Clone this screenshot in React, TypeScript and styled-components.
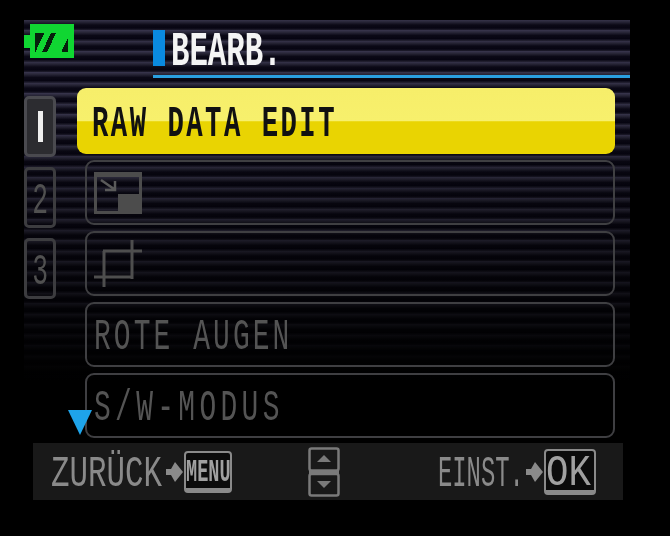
import React from 'react';
import styled, { createGlobalStyle } from 'styled-components';

const Global = createGlobalStyle`
  html, body { margin: 0; padding: 0; background: #000; }
`;

const osdFont = `"Liberation Mono", "DejaVu Sans Mono", monospace`;

const Screen = styled.div`
  width: 670px;
  height: 536px;
  background: #000;
  overflow: hidden;
  position: relative;
  box-sizing: border-box;
  padding-top: 20px;
  font-family: ${osdFont};
  filter: blur(0.5px);
`;

const Panel = styled.div`
  width: 606px;
  height: 420px;
  margin-left: 24px;
  position: relative;
  background:
    linear-gradient(to bottom, rgba(0, 0, 0, 0) 0, rgba(0, 0, 0, 0) 80px, rgba(0, 0, 0, 0.4) 200px, rgba(0, 0, 0, 0.8) 310px, #000 360px),
    repeating-linear-gradient(to bottom, #36334a 0, #272536 2px, #0b0916 5px, #070512 8px, #272536 10.5px);
`;

const Header = styled.div`
  height: 56px;
  display: flex;
  align-items: flex-start;
`;

const Battery = styled.div`
  width: 44px;
  height: 34px;
  margin: 4px 0 0 6px;
  background: #10d632;
  position: relative;
  box-sizing: border-box;
  padding: 9px 6px 6px 5px;
  display: flex;
`;

const BatteryNub = styled.span`
  position: absolute;
  left: -6px;
  top: 11px;
  width: 6px;
  height: 13px;
  background: #10d632;
`;

const BatteryCell = styled.span`
  flex: 1;
  background: linear-gradient(115deg, #06200c 0 22%, #10d632 22% 38%, #06200c 38% 50%, #10d632 50% 84%, #06200c 84%);
`;

const TitleBlock = styled.div`
  margin-left: 79px;
  flex: 1;
  height: 58px;
  border-bottom: 3px solid #2a9fe0;
  display: flex;
  align-items: flex-start;
  padding-top: 10px;
  box-sizing: border-box;
`;

const TitleMark = styled.span`
  width: 12px;
  height: 36px;
  background: #0a8ae0;
`;

const Condensed = styled.span<{ $size: number; $scale: number; $spacing?: number; $bold?: boolean; $color?: string }>`
  display: inline-block;
  padding-top: 6px;
  font-size: ${p => p.$size}px;
  line-height: 1;
  font-weight: ${p => (p.$bold ? 700 : 400)};
  letter-spacing: ${p => p.$spacing ?? 0}px;
  color: ${p => p.$color ?? '#7e7e7e'};
  white-space: pre;
  transform: scaleX(${p => p.$scale});
  transform-origin: left center;
`;

const TitleText = styled(Condensed)`
  margin: -8px 0 0 6px;
`;

const Body = styled.div`
  display: flex;
  margin-top: 12px;
  align-items: flex-start;
`;

const Tabs = styled.div`
  width: 32px;
  padding-top: 8px;
  display: flex;
  flex-direction: column;
  gap: 10px;
`;

const Tab = styled.div<{ $active?: boolean }>`
  width: 32px;
  height: 61px;
  box-sizing: border-box;
  border: 3px solid ${p => (p.$active ? '#4a4a4f' : '#3c3c3f')};
  border-radius: 5px;
  background: ${p => (p.$active ? '#2c2c30' : 'transparent')};
  display: flex;
  align-items: center;
  justify-content: center;
  overflow: hidden;
`;

const TabBar = styled.span`
  width: 5px;
  height: 31px;
  background: #eee;
`;

const TabGlyph = styled.span`
  display: inline-block;
  padding-top: 6px;
  font-size: 44px;
  line-height: 1;
  color: #505050;
  transform: scaleX(0.6);
`;

const Rows = styled.div`
  margin-left: 21px;
  width: 538px;
  display: flex;
  flex-direction: column;
  gap: 6px;
`;

const SelectedRow = styled.div`
  height: 66px;
  border-radius: 9px;
  background: linear-gradient(to bottom, #f6ee6a 0, #f7f06c 50%, #e9d402 51%, #e9d402 100%);
  display: flex;
  align-items: center;
  padding-left: 15px;
  box-sizing: border-box;
`;

const Row = styled.div`
  height: 65px;
  margin-left: 8px;
  border: 2px solid #3f3f42;
  border-radius: 9px;
  box-sizing: border-box;
  display: flex;
  align-items: center;
  padding-left: 7px;
`;

const Marker = styled.div`
  position: absolute;
  left: 44px;
  top: 390px;
  width: 0;
  height: 0;
  border-left: 12px solid transparent;
  border-right: 12px solid transparent;
  border-top: 25px solid #1ea4ea;
`;

const Footer = styled.div`
  position: relative;
  margin: 3px 0 0 33px;
  width: 590px;
  height: 57px;
  background: #191919;
  display: grid;
  grid-template-columns: 1fr auto 1fr;
  align-items: center;
  padding: 0 27px 0 18px;
  box-sizing: border-box;
`;

const FooterGroup = styled.div<{ $end?: boolean }>`
  display: flex;
  align-items: center;
  justify-content: ${p => (p.$end ? 'flex-end' : 'flex-start')};
`;

const FooterLabel = styled.div<{ $w: number }>`
  width: ${p => p.$w}px;
  height: 36px;
  display: flex;
  align-items: center;
`;

const KeyBox = styled.div<{ $w: number; $h: number }>`
  width: ${p => p.$w}px;
  height: ${p => p.$h}px;
  box-sizing: border-box;
  border: 2px solid #8a8a8a;
  border-bottom-width: 5px;
  border-radius: 4px;
  background: #0b0b0b;
  display: flex;
  align-items: center;
  justify-content: flex-start;
`;

const Arrow = () => (
  <svg width="19" height="22" viewBox="0 0 19 22">
    <path d="M1 8h5L10 1l8 10-8 10-4-7H1z" fill="#8a8a8a" />
  </svg>
);

const ResizeIcon = () => (
  <svg width="48" height="42" viewBox="0 0 48 42">
    <rect x="1.5" y="1.5" width="45" height="39" fill="none" stroke="#4c4c4c" strokeWidth="3" />
    <rect x="0" y="0" width="48" height="5" fill="#4c4c4c" />
    <rect x="24" y="22" width="24" height="20" fill="#4c4c4c" />
    <path d="M7 8l13 9M21 9v9h-10" fill="none" stroke="#5a5a5a" strokeWidth="2.5" />
  </svg>
);

const CropIcon = () => (
  <svg width="48" height="47" viewBox="0 0 48 47">
    <path d="M9 11H48M38 0V39M0 37H39M10 11V47" fill="none" stroke="#4e4e4e" strokeWidth="3" />
  </svg>
);

const UpDownIcon = () => (
  <svg width="32" height="50" viewBox="0 0 32 50">
    <rect x="1.5" y="1.5" width="29" height="22" rx="2" fill="none" stroke="#7a7a7a" strokeWidth="2.5" />
    <rect x="1.5" y="27" width="29" height="21.5" rx="2" fill="none" stroke="#7a7a7a" strokeWidth="2.5" />
    <rect x="1" y="23" width="30" height="4" fill="#7a7a7a" />
    <path d="M16 8l7 7H9z" fill="#7a7a7a" />
    <path d="M16 41l7-7H9z" fill="#7a7a7a" />
  </svg>
);

const App: React.FC = () => (
  <Screen>
    <Global />
    <Panel>
      <Header>
        <Battery>
          <BatteryNub />
          <BatteryCell />
        </Battery>
        <TitleBlock>
          <TitleMark />
          <TitleText $size={48} $scale={0.64} $bold $color="#f4f4f4">BEARB.</TitleText>
        </TitleBlock>
      </Header>
      <Body>
        <Tabs>
          <Tab $active><TabBar /></Tab>
          <Tab><TabGlyph>2</TabGlyph></Tab>
          <Tab><TabGlyph>3</TabGlyph></Tab>
        </Tabs>
        <Rows>
          <SelectedRow>
            <Condensed $size={44} $scale={0.62} $spacing={4} $bold $color="#111">RAW DATA EDIT</Condensed>
          </SelectedRow>
          <Row><ResizeIcon /></Row>
          <Row><CropIcon /></Row>
          <Row>
            <Condensed $size={45} $scale={0.62} $spacing={5} $color="#545454">ROTE AUGEN</Condensed>
          </Row>
          <Row>
            <Condensed $size={45} $scale={0.62} $spacing={7} $color="#545454">S/W-MODUS</Condensed>
          </Row>
        </Rows>
      </Body>
      <Marker />
    </Panel>
    <Footer>
      <FooterGroup>
        <FooterLabel $w={114}>
          <Condensed $size={45} $scale={0.685} $color="#8a8a8a">ZURÜCK</Condensed>
        </FooterLabel>
        <Arrow />
        <KeyBox $w={48} $h={42}>
          <Condensed $size={32} $scale={0.58} $bold $color="#a0a0a0">MENU</Condensed>
        </KeyBox>
      </FooterGroup>
      <UpDownIcon />
      <FooterGroup $end>
        <FooterLabel $w={87}>
          <Condensed $size={45} $scale={0.53} $color="#8a8a8a">EINST.</Condensed>
        </FooterLabel>
        <Arrow />
        <KeyBox $w={52} $h={46}>
          <Condensed $size={45} $scale={0.83} $color="#a0a0a0">OK</Condensed>
        </KeyBox>
      </FooterGroup>
    </Footer>
  </Screen>
);

export default App;
